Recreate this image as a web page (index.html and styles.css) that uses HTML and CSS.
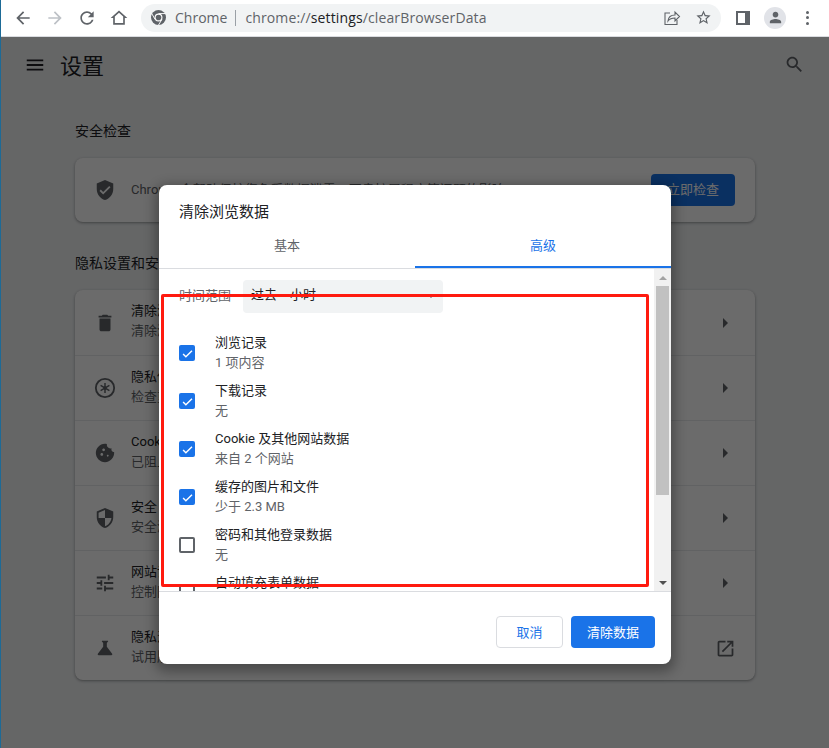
FILE: index.html
```html
<!DOCTYPE html>
<html lang="zh-CN">
<head>
    <meta charset="UTF-8">
    <meta name="viewport" content="width=device-width, initial-scale=1.0">
    <title>设置 - 清除浏览数据</title>
    <link rel="stylesheet" href="styles.css">
</head>
<body>
    <svg class="sprite" width="0" height="0">
        <symbol id="i-back" viewBox="0 0 24 24"><path d="M20 11H7.83l5.59-5.59L12 4l-8 8 8 8 1.41-1.41L7.83 13H20v-2z"/></symbol>
        <symbol id="i-forward" viewBox="0 0 24 24"><path d="M12 4l-1.41 1.41L16.17 11H4v2h12.17l-5.58 5.59L12 20l8-8z"/></symbol>
        <symbol id="i-reload" viewBox="0 0 24 24"><path d="M17.65 6.35C16.2 4.9 14.21 4 12 4c-4.42 0-7.99 3.58-7.99 8s3.57 8 7.99 8c3.73 0 6.84-2.55 7.73-6h-2.08c-.82 2.33-3.04 4-5.65 4-3.31 0-6-2.69-6-6s2.69-6 6-6c1.66 0 3.14.69 4.22 1.78L13 11h7V4l-2.35 2.35z"/></symbol>
        <symbol id="i-home" viewBox="0 0 24 24"><path d="M12 5.69l5 4.5V18H7v-7.81l5-4.5M12 3L2 12h3v8h14v-8h3L12 3z"/></symbol>
        <symbol id="i-star" viewBox="0 0 24 24"><path d="M22 9.24l-7.19-.62L12 2 9.19 8.63 2 9.24l5.46 4.73L5.82 21 12 17.27 18.18 21l-1.63-7.03L22 9.24zM12 15.4l-3.76 2.27 1-4.28-3.32-2.88 4.38-.38L12 6.1l1.71 4.04 4.38.38-3.32 2.88 1 4.28L12 15.4z"/></symbol>
        <symbol id="i-person" viewBox="0 0 24 24"><path d="M12 12c2.21 0 4-1.79 4-4s-1.79-4-4-4-4 1.79-4 4 1.79 4 4 4zm0 2c-2.67 0-8 1.34-8 4v2h16v-2c0-2.66-5.33-4-8-4z"/></symbol>
        <symbol id="i-menu" viewBox="0 0 24 24"><path d="M3 18h18v-2H3v2zm0-5h18v-2H3v2zm0-7v2h18V6H3z"/></symbol>
        <symbol id="i-search" viewBox="0 0 24 24"><path d="M15.5 14h-.79l-.28-.27C15.41 12.59 16 11.11 16 9.5 16 5.91 13.09 3 9.5 3S3 5.91 3 9.5 5.91 16 9.5 16c1.61 0 3.09-.59 4.23-1.57l.27.28v.79l5 4.99L20.49 19l-4.99-5zm-6 0C7.01 14 5 11.99 5 9.5S7.01 5 9.5 5 14 7.01 14 9.5 11.99 14 9.5 14z"/></symbol>
        <symbol id="i-verified" viewBox="0 0 24 24"><path d="M12 1L3 5v6c0 5.55 3.84 10.74 9 12 5.16-1.26 9-6.45 9-12V5l-9-4zm-2 16l-4-4 1.41-1.41L10 14.17l6.59-6.59L18 9l-8 8z"/></symbol>
        <symbol id="i-delete" viewBox="0 0 24 24"><path d="M6 19c0 1.1.9 2 2 2h8c1.1 0 2-.9 2-2V7H6v12zM19 4h-3.5l-1-1h-5l-1 1H5v2h14V4z"/></symbol>
        <symbol id="i-guide" viewBox="0 0 24 24"><path fill="none" stroke="currentColor" stroke-width="2" d="M12 2a10 10 0 1 0 0 20 10 10 0 0 0 0-20z"/><path fill="none" stroke="currentColor" stroke-width="1.6" d="M12 6.500v11M7.200 9.200l9.600 5.600M16.800 9.200l-9.600 5.600"/><circle cx="12" cy="12" r="2"/></symbol>
        <symbol id="i-cookie" viewBox="0 0 24 24"><path d="M21.95 10.99c-1.79-.03-3.7-1.95-2.68-4.22-2.97 1-5.78-1.59-5.19-4.56C7.11.74 2 6.41 2 12c0 5.52 4.48 10 10 10 5.89 0 10.54-5.08 9.95-11.01zM8.5 15c-.83 0-1.5-.67-1.5-1.5S7.67 12 8.5 12s1.5.67 1.5 1.5S9.33 15 8.5 15zm2-5C9.67 10 9 9.33 9 8.5S9.67 7 10.5 7s1.5.67 1.5 1.5-.67 1.5-1.5 1.5zm4.5 6c-.55 0-1-.45-1-1s.45-1 1-1 1 .45 1 1-.45 1-1 1z"/></symbol>
        <symbol id="i-security" viewBox="0 0 24 24"><path d="M12 1L3 5v6c0 5.55 3.84 10.74 9 12 5.16-1.26 9-6.45 9-12V5l-9-4zm0 10.99h7c-.53 4.12-3.28 7.79-7 8.94V12H5V6.3l7-3.11v8.8z"/></symbol>
        <symbol id="i-tune" viewBox="0 0 24 24"><path d="M3 17v2h6v-2H3zM3 5v2h10V5H3zm10 16v-2h8v-2h-8v-2h-2v6h2zM7 9v2H3v2h4v2h2V9H7zm14 4v-2H11v2h10zm-6-4h2V7h4V5h-4V3h-2v6z"/></symbol>
        <symbol id="i-flask" viewBox="0 0 24 24"><path d="M19.8 18.4L14 10.67V6.5l1.35-1.69c.26-.33.03-.81-.39-.81H9.04c-.42 0-.65.48-.39.81L10 6.5v4.17L4.2 18.4c-.49.66-.02 1.6.8 1.6h14c.82 0 1.29-.94.8-1.6z"/></symbol>
        <symbol id="i-open" viewBox="0 0 24 24"><path d="M19 19H5V5h7V3H5c-1.11 0-2 .9-2 2v14c0 1.1.89 2 2 2h14c1.1 0 2-.9 2-2v-7h-2v7zM14 3v2h3.59l-9.83 9.83 1.41 1.41L19 6.41V10h2V3h-7z"/></symbol>
        <symbol id="i-right" viewBox="0 0 24 24"><path d="M10 7l5 5-5 5z"/></symbol>
        <symbol id="i-check" viewBox="0 0 24 24"><path d="M9 16.2L4.8 12l-1.9 1.9L9 20 21.2 7.8l-1.9-1.9z"/></symbol>
    </svg>

    <div class="screen">
        <!-- Панель браузера -->
        <header class="toolbar">
            <button class="tool"><svg class="icon"><use href="#i-back"/></svg></button>
            <button class="tool tool-off"><svg class="icon"><use href="#i-forward"/></svg></button>
            <button class="tool"><svg class="icon"><use href="#i-reload"/></svg></button>
            <button class="tool"><svg class="icon"><use href="#i-home"/></svg></button>
            <div class="omnibox">
                <svg class="chrome-logo" viewBox="0 0 16 16">
                    <circle cx="8" cy="8" r="8" fill="#5f6368"/>
                    <circle cx="8" cy="8" r="4.2" fill="#fff"/>
                    <circle cx="8" cy="8" r="3" fill="#5f6368"/>
                    <path d="M8 3.8h7.2M4.4 10.1L.9 4M11.6 10.1L8 16" stroke="#fff" stroke-width="1"/>
                </svg>
                <span class="omni-name">Chrome</span>
                <span class="omni-sep"></span>
                <span class="omni-url">chrome://<b>settings</b>/clearBrowserData</span>
                <svg class="omni-share" viewBox="0 0 18 18" fill="none" stroke="#5f6368" stroke-width="1.1">
                    <path d="M7 4H2v11.500h12V11"/>
                    <path d="M5 12c.4-4 3-6 7-6V3l4.500 4.500L12 12V9c-3 0-5.500 1-7 3z"/>
                </svg>
                <svg class="omni-star"><use href="#i-star"/></svg>
            </div>
            <button class="tool"><span class="side-panel"></span></button>
            <button class="tool"><span class="avatar"><svg class="avatar-icon"><use href="#i-person"/></svg></span></button>
            <button class="tool"><span class="dots"><i></i><i></i><i></i></span></button>
        </header>

        <!-- Страница настроек -->
        <main class="settings">
            <div class="settings-head">
                <svg class="head-menu"><use href="#i-menu"/></svg>
                <h1 class="settings-title">设置</h1>
                <svg class="head-search"><use href="#i-search"/></svg>
            </div>

            <h2 class="section-label">安全检查</h2>
            <section class="card check-card">
                <svg class="row-icon"><use href="#i-verified"/></svg>
                <span class="check-text">Chrome 会帮助保护您免受数据泄露、不良扩展程序等问题的影响</span>
                <button class="check-btn">立即检查</button>
            </section>

            <h2 class="section-label section-label-second">隐私设置和安全性</h2>
            <section class="card">
                <div class="row">
                    <svg class="row-icon"><use href="#i-delete"/></svg>
                    <div class="row-text"><div class="row-title">清除浏览数据</div><div class="row-sub">清除浏览记录、Cookie、缓存及其他数据</div></div>
                    <svg class="row-arrow"><use href="#i-right"/></svg>
                </div>
                <div class="row">
                    <svg class="row-icon"><use href="#i-guide"/></svg>
                    <div class="row-text"><div class="row-title">隐私保护指南</div><div class="row-sub">检查重要的隐私设置和安全设置</div></div>
                    <svg class="row-arrow"><use href="#i-right"/></svg>
                </div>
                <div class="row">
                    <svg class="row-icon"><use href="#i-cookie"/></svg>
                    <div class="row-text"><div class="row-title">Cookie 及其他网站数据</div><div class="row-sub">已阻止无痕模式下的第三方 Cookie</div></div>
                    <svg class="row-arrow"><use href="#i-right"/></svg>
                </div>
                <div class="row">
                    <svg class="row-icon"><use href="#i-security"/></svg>
                    <div class="row-text"><div class="row-title">安全</div><div class="row-sub">安全浏览（危险网站防护功能）和其他安全设置</div></div>
                    <svg class="row-arrow"><use href="#i-right"/></svg>
                </div>
                <div class="row">
                    <svg class="row-icon"><use href="#i-tune"/></svg>
                    <div class="row-text"><div class="row-title">网站设置</div><div class="row-sub">控制网站可以使用和显示什么信息</div></div>
                    <svg class="row-arrow"><use href="#i-right"/></svg>
                </div>
                <div class="row">
                    <svg class="row-icon"><use href="#i-flask"/></svg>
                    <div class="row-text"><div class="row-title">隐私沙盒</div><div class="row-sub">试用版功能已开启</div></div>
                    <svg class="row-open"><use href="#i-open"/></svg>
                </div>
            </section>
        </main>

        <!-- Затемнение и диалог -->
        <div class="backdrop"></div>
        <div class="dialog">
            <h2 class="dialog-title">清除浏览数据</h2>
            <div class="tabs">
                <div class="tab">基本</div>
                <div class="tab tab-active">高级</div>
            </div>
            <div class="dialog-body">
                <div class="options">
                    <div class="range">
                        <span class="range-label">时间范围</span>
                        <div class="range-select">过去一小时<span class="range-caret"></span></div>
                    </div>
                    <div class="option">
                        <span class="box box-on"><svg class="box-check"><use href="#i-check"/></svg></span>
                        <div class="option-text"><div class="option-title">浏览记录</div><div class="option-sub">1 项内容</div></div>
                    </div>
                    <div class="option">
                        <span class="box box-on"><svg class="box-check"><use href="#i-check"/></svg></span>
                        <div class="option-text"><div class="option-title">下载记录</div><div class="option-sub">无</div></div>
                    </div>
                    <div class="option">
                        <span class="box box-on"><svg class="box-check"><use href="#i-check"/></svg></span>
                        <div class="option-text"><div class="option-title">Cookie 及其他网站数据</div><div class="option-sub">来自 2 个网站</div></div>
                    </div>
                    <div class="option">
                        <span class="box box-on"><svg class="box-check"><use href="#i-check"/></svg></span>
                        <div class="option-text"><div class="option-title">缓存的图片和文件</div><div class="option-sub">少于 2.3 MB</div></div>
                    </div>
                    <div class="option">
                        <span class="box"></span>
                        <div class="option-text"><div class="option-title">密码和其他登录数据</div><div class="option-sub">无</div></div>
                    </div>
                    <div class="option">
                        <span class="box"></span>
                        <div class="option-text"><div class="option-title">自动填充表单数据</div><div class="option-sub">无</div></div>
                    </div>
                </div>
                <div class="scrollbar">
                    <span class="scroll-up"></span>
                    <span class="scroll-thumb"></span>
                    <span class="scroll-down"></span>
                </div>
            </div>
            <div class="dialog-foot">
                <button class="btn btn-cancel">取消</button>
                <button class="btn btn-primary">清除数据</button>
            </div>
        </div>

        <!-- Красная рамка-пометка -->
        <div class="mark"></div>
    </div>
</body>
</html>
```

FILE: styles.css
```css
/* Базовые стили */
* {
    margin: 0;
    padding: 0;
    box-sizing: border-box;
}

html, body {
    width: 829px;
    height: 748px;
    overflow: hidden;
}

body {
    font-family: "Roboto", "Noto Sans CJK SC", sans-serif;
    color: #202124;
    background: #f1f3f4;
}

button {
    font: inherit;
    border: none;
    background: none;
}

.sprite {
    position: absolute;
}

.screen {
    position: relative;
    width: 829px;
    height: 748px;
    border-left: 1px solid #1d6a96;
    overflow: hidden;
}

/* Панель браузера */
.toolbar {
    display: flex;
    align-items: center;
    height: 37px;
    padding: 0 6px 1px 6px;
    background: #fff;
    border-bottom: 1px solid #dadce0;
}

.tool {
    display: flex;
    align-items: center;
    justify-content: center;
    width: 32px;
    height: 32px;
    flex: none;
    color: #5f6368;
}

.tool-off {
    color: #bdc1c6;
}

.icon {
    width: 20px;
    height: 20px;
    fill: currentColor;
}

.omnibox {
    display: flex;
    align-items: center;
    flex: 1;
    height: 28px;
    margin: 0 6px;
    padding: 0 9px 0 10px;
    border-radius: 14px;
    background: #f1f3f4;
    font-family: "Open Sans", "Noto Sans", sans-serif;
    font-size: 14px;
    color: #5f6368;
}

.chrome-logo {
    width: 15px;
    height: 15px;
    margin-right: 9px;
    flex: none;
}

.omni-sep {
    width: 1px;
    height: 16px;
    margin: 0 9px 0 8px;
    background: #9aa0a6;
}

.omni-url {
    flex: 1;
    letter-spacing: 0.13px;
}

.omni-url b {
    font-weight: 400;
    color: #202124;
}

.omni-share {
    width: 18px;
    height: 18px;
    margin-right: 14px;
}

.omni-star {
    width: 17px;
    height: 17px;
    fill: #5f6368;
}

.side-panel {
    display: block;
    width: 14px;
    height: 14px;
    border: 2px solid #5f6368;
    border-right-width: 5px;
    background: #fff;
}

.avatar {
    display: flex;
    align-items: center;
    justify-content: center;
    width: 22px;
    height: 22px;
    border-radius: 50%;
    background: #e1e3e8;
}

.avatar-icon {
    width: 17px;
    height: 17px;
    fill: #5f6368;
}

.dots {
    display: flex;
    flex-direction: column;
    gap: 2.5px;
}

.dots i {
    display: block;
    width: 3px;
    height: 3px;
    border-radius: 50%;
    background: #5f6368;
}

/* Страница настроек */
.settings {
    padding: 0 74px;
}

.settings-head {
    display: flex;
    align-items: center;
    height: 55px;
    margin: 0 -48px 0 -51px;
}

.head-menu {
    width: 22px;
    height: 22px;
    fill: #202124;
    flex: none;
}

.settings-title {
    flex: 1;
    margin: 4px 0 0 14px;
    font-size: 22px;
    line-height: 30px;
    font-weight: 400;
    color: #202124;
}

.head-search {
    width: 21px;
    height: 21px;
    fill: #5f6368;
    margin-right: -2px;
    flex: none;
}

.section-label {
    margin-top: 28px;
    font-size: 14px;
    line-height: 22px;
    font-weight: 400;
    color: #202124;
}

.section-label-second {
    margin-top: 30px;
}

.card {
    margin-top: 16px;
    background: #fff;
    border-radius: 8px;
    box-shadow: 0 1px 2px rgba(60, 64, 67, 0.3), 0 1px 3px 1px rgba(60, 64, 67, 0.15);
}

.check-card {
    display: flex;
    align-items: center;
    height: 64px;
    padding: 0 20px 0 19px;
}

.row-icon {
    width: 22px;
    height: 22px;
    margin-right: 15px;
    flex: none;
    fill: #5f6368;
    color: #5f6368;
}

.check-text {
    flex: 1;
    margin-bottom: 3px;
    font-size: 13px;
    color: #5f6368;
    white-space: nowrap;
}

.check-btn {
    width: 84px;
    height: 32px;
    padding-bottom: 3px;
    border-radius: 4px;
    background: #1a73e8;
    color: #fff;
    font-size: 13px;
}

.row {
    display: flex;
    align-items: center;
    height: 65px;
    padding: 0 20px 0 19px;
    border-top: 1px solid #e8eaed;
}

.row:first-child {
    border-top: none;
}

.row-text {
    flex: 1;
    margin-bottom: 3px;
    font-size: 13px;
    line-height: 20px;
}

.row-sub {
    color: #5f6368;
}

.row-arrow {
    width: 24px;
    height: 24px;
    margin-right: -2px;
    fill: #5f6368;
}

.row-open {
    width: 21px;
    height: 21px;
    margin-right: -1px;
    fill: #5f6368;
}

/* Затемнение и диалог */
.backdrop {
    position: absolute;
    left: 0;
    top: 37px;
    right: 0;
    bottom: 0;
    background: rgba(0, 0, 0, 0.58);
}

.dialog {
    position: absolute;
    left: 158px;
    top: 185px;
    display: flex;
    flex-direction: column;
    width: 512px;
    height: 479px;
    border-radius: 8px;
    background: #fff;
    box-shadow: 0 4px 12px 4px rgba(0, 0, 0, 0.3);
    overflow: hidden;
}

.dialog-title {
    height: 40px;
    padding: 16px 20px 0;
    font-size: 15px;
    line-height: 22px;
    font-weight: 400;
    color: #202124;
}

.tabs {
    display: flex;
    height: 44px;
    border-bottom: 1px solid #dadce0;
}

.tab {
    flex: 1;
    padding-top: 11px;
    text-align: center;
    font-size: 13px;
    line-height: 20px;
    color: #5f6368;
}

.tab-active {
    color: #1a73e8;
    border-bottom: 2px solid #1a73e8;
}

.dialog-body {
    display: flex;
    height: 323px;
    flex: none;
    border-bottom: 1px solid #dadce0;
}

.options {
    flex: 1;
    overflow: hidden;
    font-size: 13px;
    line-height: 20px;
}

.range {
    display: flex;
    align-items: center;
    height: 60px;
    padding: 11px 20px 16px;
    color: #5f6368;
}

.range-label {
    width: 64px;
    margin-bottom: 2px;
}

.range-select {
    position: relative;
    width: 200px;
    height: 33px;
    padding: 5px 8px;
    border-radius: 4px;
    background: #f1f3f4;
    color: #202124;
}

.range-caret {
    position: absolute;
    right: 9px;
    top: 15px;
    border: 3px solid transparent;
    border-top-color: #5f6368;
}

.option {
    display: flex;
    align-items: center;
    gap: 20px;
    height: 48px;
    padding: 0 20px;
}

.option-text {
    margin-bottom: 1px;
}

.option-sub {
    color: #5f6368;
}

.box {
    display: flex;
    align-items: center;
    justify-content: center;
    width: 16px;
    height: 16px;
    flex: none;
    border: 2px solid #5f6368;
    border-radius: 2px;
}

.box-on {
    border: none;
    background: #1a73e8;
}

.box-check {
    width: 13px;
    height: 13px;
    fill: #fff;
}

.scrollbar {
    display: flex;
    flex-direction: column;
    align-items: center;
    width: 17px;
    flex: none;
    padding: 0 2px;
    background: #f1f1f1;
}

.scroll-up {
    margin: 7px 0 6px;
    border: 4px solid transparent;
    border-top: none;
    border-bottom: 4px solid #a3a3a3;
}

.scroll-thumb {
    width: 13px;
    height: 209px;
    background: #c1c1c1;
}

.scroll-down {
    margin-top: auto;
    margin-bottom: 6px;
    border: 4px solid transparent;
    border-bottom: none;
    border-top: 4px solid #505050;
}

.dialog-foot {
    display: flex;
    justify-content: flex-end;
    gap: 8px;
    padding: 24px 16px 0;
}

.btn {
    height: 32px;
    padding-bottom: 2px;
    border-radius: 4px;
    font-size: 13px;
}

.btn-cancel {
    width: 67px;
    border: 1px solid #dadce0;
    background: #fff;
    color: #1a73e8;
}

.btn-primary {
    width: 84px;
    background: #1a73e8;
    color: #fff;
}

/* Красная рамка-пометка */
.mark {
    position: absolute;
    left: 160px;
    top: 294px;
    width: 488px;
    height: 293px;
    border: 3px solid #ff1a0f;
    border-radius: 2px;
}
```
